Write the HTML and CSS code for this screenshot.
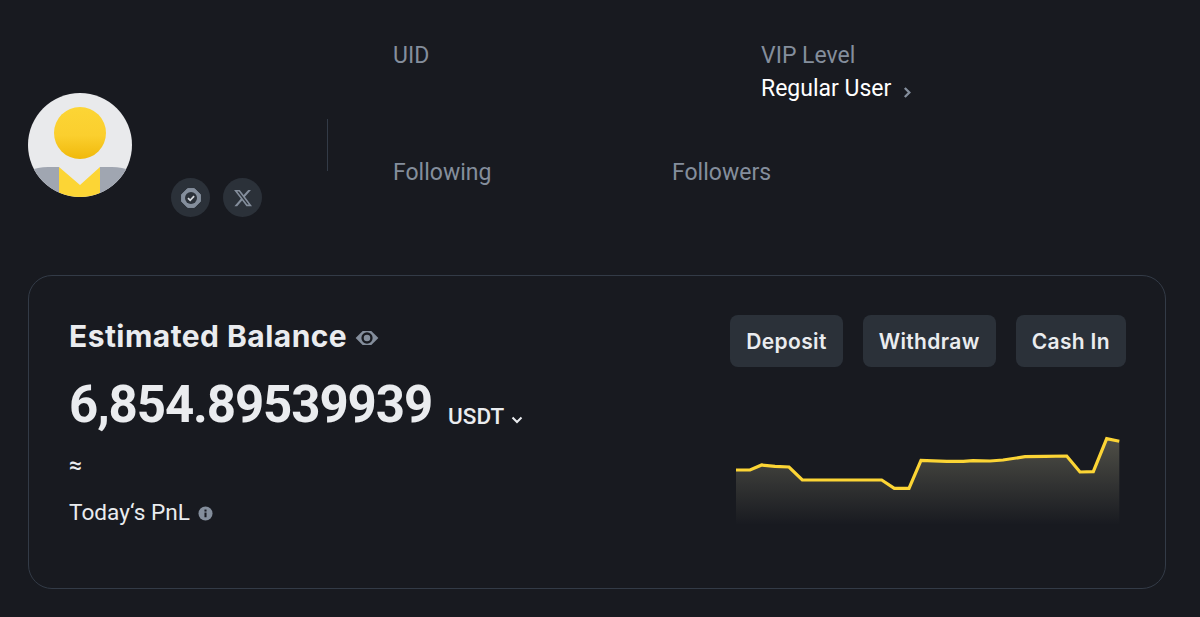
FILE: index.html
```html
<!DOCTYPE html>
<html lang="en">
<head>
  <meta charset="UTF-8" />
  <title>Dashboard</title>
  <link rel="stylesheet" href="styles.css">
</head>
<body>
  <header class="profile">
    <div class="identity">
      <svg class="avatar" viewBox="0 0 104 104" width="104" height="104">
        <defs>
          <linearGradient id="headFill" x1="0" y1="0" x2="0" y2="1">
            <stop offset="0" stop-color="#fcd535"/>
            <stop offset="0.55" stop-color="#fbcf2e"/>
            <stop offset="1" stop-color="#f0b90b"/>
          </linearGradient>
          <clipPath id="avatarClip"><circle cx="52" cy="52" r="52"/></clipPath>
        </defs>
        <g clip-path="url(#avatarClip)">
          <rect width="104" height="104" fill="#e9eaec"/>
          <circle cx="52" cy="40" r="26" fill="url(#headFill)"/>
          <path d="M0 104V78Q10 74 20 74H31V104Z" fill="#a0a6b1"/>
          <path d="M72 74H84Q94 74 104 78V104H72Z" fill="#a0a6b1"/>
          <path d="M31 74L52 92L72 74V104H31Z" fill="#fcd535"/>
        </g>
      </svg>
      <div class="badges">
        <span class="badge">
          <svg viewBox="0 0 24 24" width="24" height="24">
            <path d="M8.600 2.600h6.800l6 6v6.800l-6 6H8.600l-6-6V8.600z" fill="#848e9c" stroke="#848e9c" stroke-linejoin="round"/>
            <circle cx="12" cy="12" r="6" fill="#2b3139"/>
            <path d="M9 12.200l2.200 2.100 3.900-4.100" fill="none" stroke="#d5d9de" stroke-width="1.800"/>
          </svg>
        </span>
        <span class="badge">
          <svg viewBox="0 0 24 24" width="20" height="20">
            <path d="M18.244 2.25h3.308l-7.227 8.26 8.502 11.24H16.17l-5.214-6.817L4.99 21.75H1.68l7.73-8.835L1.254 2.25H8.08l4.713 6.231zm-1.161 17.52h1.833L7.084 4.126H5.117z" fill="#848e9c"/>
          </svg>
        </span>
      </div>
    </div>
    <div class="divider"></div>
    <div class="stats">
      <div class="stats-row stats-top">
        <div class="stat stat-uid">
          <span class="label">UID</span>
        </div>
        <div class="stat">
          <span class="label">VIP Level</span>
          <span class="value">Regular User<svg class="chevron-right" viewBox="0 0 10 12" width="9" height="11"><path d="M2 1L7 6L2 11" fill="none" stroke="#848e9c" stroke-width="2.600"/></svg></span>
        </div>
      </div>
      <div class="stats-row">
        <div class="stat stat-following"><span class="label">Following</span></div>
        <div class="stat"><span class="label">Followers</span></div>
      </div>
    </div>
  </header>

  <section class="balance-card">
    <div class="balance-info">
      <h2 class="balance-title">Estimated Balance
        <svg class="eye" viewBox="0 0 24 24" width="26" height="26"><path d="M1.500 12L8 5.500h8l6.500 6.500L16 18.500H8z" fill="#848e9c"/><circle cx="12" cy="12" r="5.200" fill="#181a20"/><circle cx="12" cy="12" r="3" fill="#848e9c"/></svg>
      </h2>
      <div class="balance-amount">
        <span class="amount">6,854.89539939</span>
        <span class="currency">USDT
          <svg class="chevron-down" viewBox="0 0 12 8" width="12" height="8"><path d="M1.500 1.500L6 6L10.500 1.500" fill="none" stroke="#eaecef" stroke-width="2"/></svg>
        </span>
      </div>
      <div class="approx">≈</div>
      <div class="pnl">Today‘s PnL
        <svg viewBox="0 0 16 16" width="15" height="15"><circle cx="8" cy="8" r="7.500" fill="#848e9c"/><rect x="6.900" y="7" width="2.200" height="5" fill="#181a20"/><rect x="6.900" y="3.800" width="2.200" height="2.100" fill="#181a20"/></svg>
      </div>
    </div>
    <div class="balance-side">
      <div class="actions">
        <button class="action">Deposit</button>
        <button class="action">Withdraw</button>
        <button class="action">Cash In</button>
      </div>
      <svg class="chart" viewBox="0 0 384 90" width="384" height="90">
        <defs>
          <linearGradient id="chartFill" x1="0" y1="0" x2="0" y2="1">
            <stop offset="0" stop-color="#e4deb0" stop-opacity="0.27"/>
            <stop offset="1" stop-color="#e4deb0" stop-opacity="0"/>
          </linearGradient>
        </defs>
        <path d="M0 35H14L25.700 30L39 31.300L53 32L66.300 45H145.700L158.300 53.300H173L185 25.300L210.700 26.300H227.300L237 25.700L254 26L267 25L289 21.700L309 21.300L330.700 21L344 37L357.300 36.700L370.700 3.700L383.300 6.300V90H0Z" fill="url(#chartFill)"/>
        <path d="M0 35H14L25.700 30L39 31.300L53 32L66.300 45H145.700L158.300 53.300H173L185 25.300L210.700 26.300H227.300L237 25.700L254 26L267 25L289 21.700L309 21.300L330.700 21L344 37L357.300 36.700L370.700 3.700L383.300 6.300" fill="none" stroke="#fcd535" stroke-width="3.200"/>
      </svg>
    </div>
  </section>
</body>
</html>
```

FILE: styles.css
```css
* {
  margin: 0;
  padding: 0;
  box-sizing: border-box;
}

body {
  background: #181a20;
  color: #eaecef;
  font-family: "Roboto", "Liberation Sans", sans-serif;
  padding: 0 34px 0 28px;
  overflow: hidden;
}

.profile {
  display: flex;
  height: 275px;
}

.identity {
  display: flex;
  width: 299px;
  padding-top: 93px;
}

.avatar {
  flex: none;
}

.badges {
  display: flex;
  gap: 13px;
  margin: 85px 0 0 39px;
  height: 39px;
}

.badge {
  width: 39px;
  height: 39px;
  border-radius: 50%;
  background: #2b3139;
  display: flex;
  align-items: center;
  justify-content: center;
}

.divider {
  width: 1px;
  height: 52px;
  margin-top: 119px;
  background: #333b47;
}

.stats {
  margin-left: 65px;
  padding-top: 41px;
}

.stats-row {
  display: flex;
}

.stats-top {
  height: 117px;
}

.stat {
  display: flex;
  flex-direction: column;
  gap: 3px;
}

.stat-uid {
  width: 368px;
}

.stat-following {
  width: 279px;
}

.label {
  color: #848e9c;
  font-size: 23px;
  line-height: 30px;
}

.value {
  color: #fff;
  font-size: 23px;
  line-height: 30px;
}

.chevron-right {
  margin-left: 12px;
  vertical-align: -2px;
}

.balance-card {
  height: 314px;
  border: 1px solid #333b47;
  border-radius: 24px;
  padding: 39px 39px 0 40px;
  display: flex;
  justify-content: space-between;
}

.balance-title {
  font-family: "Inter", "Roboto", sans-serif;
  font-size: 30px;
  line-height: 40px;
  font-weight: 700;
  letter-spacing: 0.45px;
  margin-top: 1px;
  display: flex;
  align-items: center;
  gap: 7px;
}

.eye {
  margin-top: 4px;
}

.balance-amount {
  display: flex;
  align-items: flex-end;
  margin-top: 21px;
}

.amount {
  font-size: 51px;
  line-height: 56px;
  font-weight: 700;
  letter-spacing: -1.1px;
}

.currency {
  font-size: 22.5px;
  line-height: 30px;
  font-weight: 500;
  margin: 0 0 2px 16px;
}

.chevron-down {
  margin-left: 2px;
}

.approx {
  font-size: 23px;
  font-weight: 500;
  line-height: 30px;
  margin-top: 18px;
}

.pnl {
  font-size: 22.6px;
  line-height: 30px;
  margin-top: 17px;
  display: flex;
  align-items: center;
  gap: 8px;
}

.balance-side {
  display: flex;
  flex-direction: column;
  align-items: flex-end;
}

.actions {
  display: flex;
  gap: 20px;
}

.action {
  height: 52px;
  padding: 0 16px;
  border: none;
  border-radius: 8px;
  background: #2b3139;
  color: #eaecef;
  font-family: "Inter", "Roboto", sans-serif;
  font-size: 21px;
  font-weight: 600;
  letter-spacing: 0.35px;
}

.chart {
  margin: 68px 6px 0 0;
}
```
